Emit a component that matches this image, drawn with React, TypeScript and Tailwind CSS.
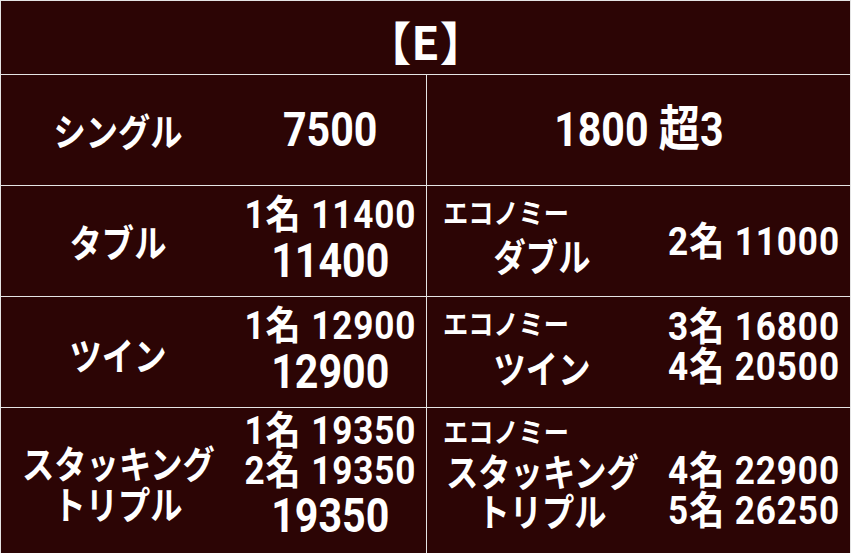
import React from "react";

const FONT = "font-['Noto_Sans_CJK_JP','Noto_Sans_CJK_SC',sans-serif]";
const NUM = "font-['Roboto','Noto_Sans_CJK_JP',sans-serif]";

function Kata({ children, lh = "leading-[40px]", cls = "" }: { children: React.ReactNode; lh?: string; cls?: string }) {
  return (
    <div className={"flex justify-center text-[38px] font-bold " + lh + " " + cls}>
      <span className="inline-block shrink-0 scale-x-[0.85] whitespace-nowrap">{children}</span>
    </div>
  );
}

function Eco() {
  return (
    <div className="text-left text-[28px] font-bold leading-[38px]">
      <span className="inline-block origin-left scale-x-[0.9] whitespace-nowrap">エコノミー</span>
    </div>
  );
}

function Small({
  children,
  align = "center",
  lh = "leading-[40px]",
}: {
  children: React.ReactNode;
  align?: "center" | "right";
  lh?: string;
}) {
  return (
    <div
      className={
        (align === "right" ? "flex justify-end " : "flex justify-center ") +
        NUM +
        " text-[39px] font-bold tracking-[1px] " +
        lh
      }
    >
      <span
        className={
          (align === "right" ? "origin-right " : "origin-center ") +
          "inline-block shrink-0 scale-x-[0.9] whitespace-nowrap"
        }
      >
        {children}
      </span>
    </div>
  );
}

function Big({ children }: { children: React.ReactNode }) {
  return (
    <div className={NUM + " flex justify-center text-[49px] font-bold leading-[48px]"}>
      <span className="inline-block shrink-0 scale-x-[0.84] whitespace-nowrap">{children}</span>
    </div>
  );
}

export default function App() {
  return (
    <div
      className={
        FONT +
        " w-[851px] h-[553px] bg-[#2c0505] text-white border-t border-l border-r border-[#e4e4e4] flex flex-col overflow-hidden"
      }
    >
      {/* header */}
      <div className="h-[74px] shrink-0 border-b border-[#e4e4e4] flex items-center justify-center pt-[4px]">
        <span className="text-[46px] font-bold leading-[46px] whitespace-nowrap">【E】</span>
      </div>

      {/* single */}
      <div className="h-[111px] shrink-0 flex border-b border-[#e4e4e4]">
        <div className="w-[426px] shrink-0 flex border-r border-[#e4e4e4]">
          <div className="w-[234px] flex items-center justify-center">
            <Kata>シングル</Kata>
          </div>
          <div className="flex-1 flex items-center justify-center">
            <Big>7500</Big>
          </div>
        </div>
        <div className="flex-1 flex items-center justify-center">
          <Big>1800 超3</Big>
        </div>
      </div>

      {/* double */}
      <div className="h-[111px] shrink-0 flex border-b border-[#e4e4e4]">
        <div className="w-[426px] shrink-0 flex border-r border-[#e4e4e4]">
          <div className="w-[234px] flex items-center justify-center">
            <Kata>タブル</Kata>
          </div>
          <div className="flex-1 flex flex-col pt-[7px]">
            <Small lh="leading-[44px]">1名 11400</Small>
            <Big>11400</Big>
          </div>
        </div>
        <div className="flex-1 flex pl-[16px] pr-[10px]">
          <div className="w-[198px] flex flex-col pt-[7px]">
            <Eco />
            <Kata cls="mt-[4px]">ダブル</Kata>
          </div>
          <div className="flex-1 flex flex-col pt-[36px]">
            <Small align="right">2名 11000</Small>
          </div>
        </div>
      </div>

      {/* twin */}
      <div className="h-[111px] shrink-0 flex border-b border-[#e4e4e4]">
        <div className="w-[426px] shrink-0 flex border-r border-[#e4e4e4]">
          <div className="w-[234px] flex items-center justify-center pt-[3px]">
            <Kata>ツイン</Kata>
          </div>
          <div className="flex-1 flex flex-col pt-[7px]">
            <Small lh="leading-[44px]">1名 12900</Small>
            <Big>12900</Big>
          </div>
        </div>
        <div className="flex-1 flex pl-[16px] pr-[10px]">
          <div className="w-[198px] flex flex-col pt-[7px]">
            <Eco />
            <Kata cls="mt-[5px]">ツイン</Kata>
          </div>
          <div className="flex-1 flex flex-col pt-[10px]">
            <Small align="right">3名 16800</Small>
            <Small align="right">4名 20500</Small>
          </div>
        </div>
      </div>

      {/* stacking triple */}
      <div className="flex-1 flex">
        <div className="w-[426px] shrink-0 flex border-r border-[#e4e4e4]">
          <div className="w-[234px] flex flex-col pt-[33px]">
            <Kata lh="leading-[41px]">スタッキング</Kata>
            <Kata lh="leading-[41px]">トリプル</Kata>
          </div>
          <div className="flex-1 flex flex-col pt-[4px]">
            <Small lh="leading-[39px]">1名 19350</Small>
            <Small lh="leading-[41px]">2名 19350</Small>
            <Big>19350</Big>
          </div>
        </div>
        <div className="flex-1 flex pl-[16px] pr-[10px]">
          <div className="w-[198px] flex flex-col pt-[4px]">
            <Eco />
            <Kata>スタッキング</Kata>
            <Kata>トリプル</Kata>
          </div>
          <div className="flex-1 flex flex-col pt-[43px]">
            <Small align="right">4名 22900</Small>
            <Small align="right">5名 26250</Small>
          </div>
        </div>
      </div>
    </div>
  );
}
